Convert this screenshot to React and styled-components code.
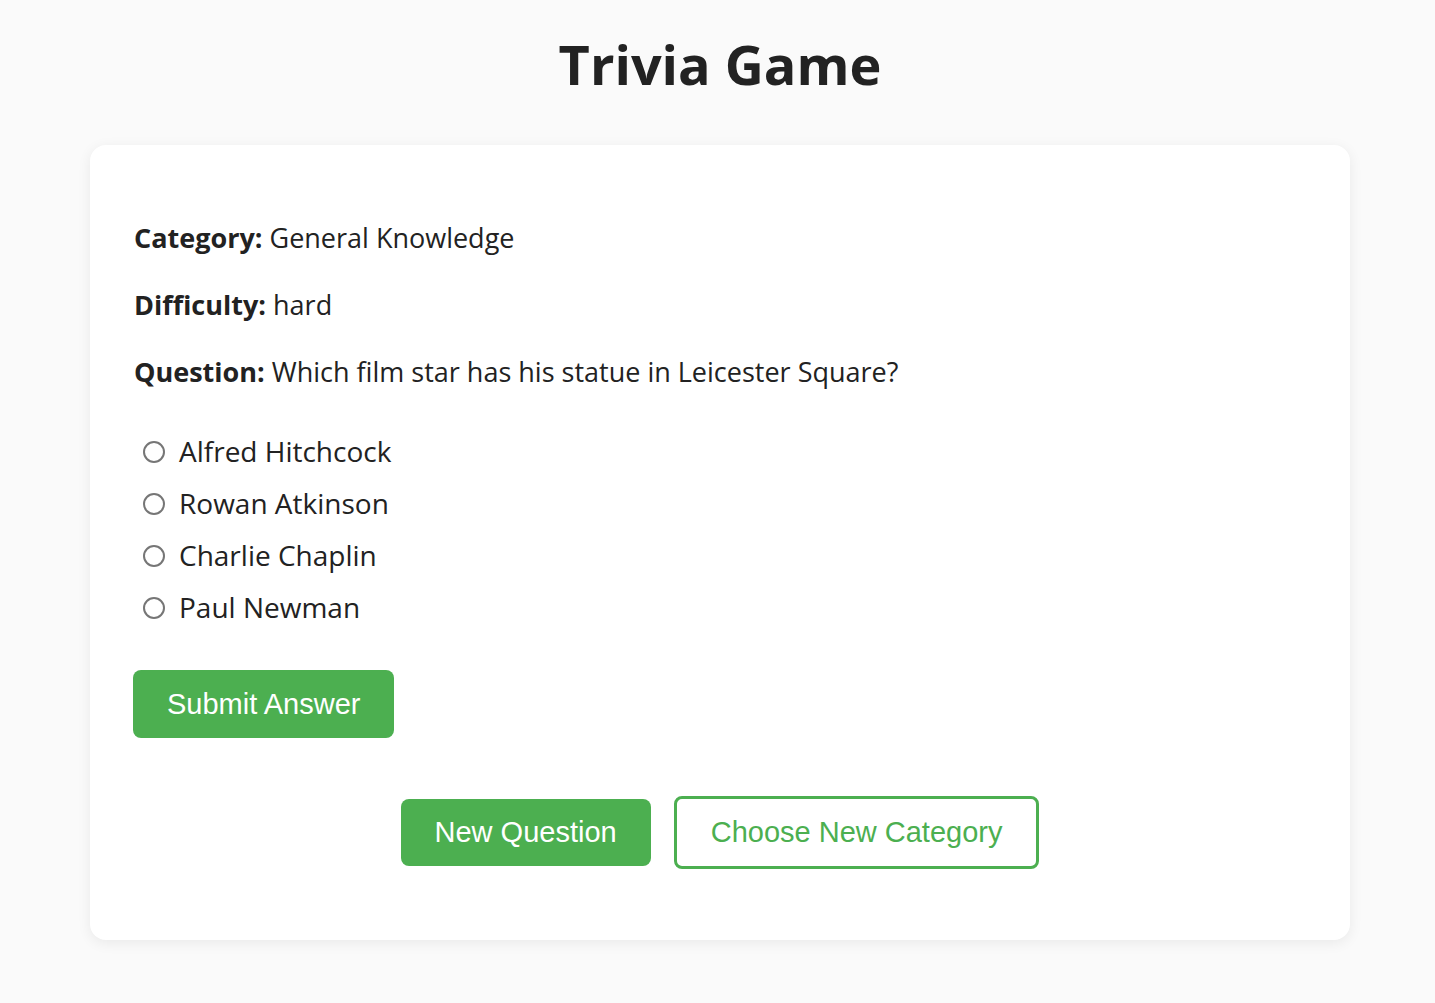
import React, { useState } from "react";
import styled, { createGlobalStyle } from "styled-components";

const GlobalStyle = createGlobalStyle`
  body {
    margin: 0;
    background: #fafafa;
    font-family: "Open Sans", "Noto Sans", sans-serif;
    color: #222;
  }
`;

const Page = styled.main`
  padding: 24px 0 60px 5px;
`;

const Title = styled.h1`
  margin: 0 0 41px;
  text-align: center;
  font-size: 54px;
  font-weight: 700;
  line-height: 80px;
  color: #222;
`;

const Card = styled.section`
  width: 1260px;
  margin: 0 auto;
  box-sizing: border-box;
  padding: 73px 44px 71px 44px;
  background: #fff;
  border-radius: 16px;
  box-shadow: 0 3px 14px rgba(0, 0, 0, 0.07);
`;

const Info = styled.p`
  margin: 0 0 28px;
  font-size: 27px;
  line-height: 39px;
  strong {
    font-weight: 700;
  }
`;

const Options = styled.div`
  display: flex;
  flex-direction: column;
  gap: 13px;
  margin: 41px 0 43px;
`;

const Option = styled.label`
  display: flex;
  align-items: center;
  gap: 14px;
  padding-left: 9px;
  font-size: 28px;
  line-height: 39px;
  cursor: pointer;
`;

const Radio = styled.input`
  appearance: none;
  margin: 0;
  width: 22px;
  height: 22px;
  border: 2px solid #767676;
  border-radius: 50%;
  box-sizing: border-box;
  &:checked {
    border-color: #4caf50;
    background: radial-gradient(circle, #4caf50 45%, #fff 50%);
  }
`;

const Button = styled.button`
  font-family: "Liberation Sans", Arial, sans-serif;
  font-size: 29px;
  border-radius: 8px;
  cursor: pointer;
  box-sizing: border-box;
  padding: 0 ${p => (p.$outline ? "34px" : "34px")};
  height: ${p => (p.$outline ? "73px" : "67px")};
  color: ${p => (p.$outline ? "#4caf50" : "#fff")};
  background: ${p => (p.$outline ? "#fff" : "#4caf50")};
  border: ${p => (p.$outline ? "3px solid #4caf50" : "none")};
`;

const Submit = styled(Button)`
  height: 68px;
  margin-left: -1px;
`;

const Actions = styled.div`
  display: flex;
  justify-content: center;
  align-items: center;
  gap: 23px;
  margin-top: 58px;
`;

const answers = ["Alfred Hitchcock", "Rowan Atkinson", "Charlie Chaplin", "Paul Newman"];

export default function App() {
  const [choice, setChoice] = useState("");
  return (
    <Page>
      <GlobalStyle />
      <Title>Trivia Game</Title>
      <Card>
        <Info>
          <strong>Category:</strong> General Knowledge
        </Info>
        <Info>
          <strong>Difficulty:</strong> hard
        </Info>
        <Info>
          <strong>Question:</strong> Which film star has his statue in Leicester Square?
        </Info>
        <Options>
          {answers.map(a => (
            <Option key={a}>
              <Radio
                type="radio"
                name="answer"
                value={a}
                checked={choice === a}
                onChange={() => setChoice(a)}
              />
              {a}
            </Option>
          ))}
        </Options>
        <Submit>Submit Answer</Submit>
        <Actions>
          <Button>New Question</Button>
          <Button $outline>Choose New Category</Button>
        </Actions>
      </Card>
    </Page>
  );
}
